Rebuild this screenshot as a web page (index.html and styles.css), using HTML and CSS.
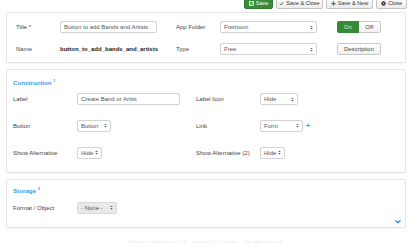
FILE: index.html
```html
<!DOCTYPE html>
<html>
<head>
<meta charset="utf-8">
<link rel="stylesheet" href="styles.css">
</head>
<body>
<div class="toolbar">
  <button class="tb tb-save"><svg class="ic" viewBox="0 0 8 8"><rect x="0.7" y="0.7" width="6.6" height="6.6" fill="none" stroke="#fff" stroke-width="1.2"/><path d="M2 4.2 L3.5 5.6 L6.2 2.3" fill="none" stroke="#fff" stroke-width="1.2"/></svg>Save</button>
  <button class="tb"><svg class="ic" viewBox="0 0 8 8"><path d="M1 4.3 L3.1 6.3 L7 1.8" fill="none" stroke="#3a8a3a" stroke-width="1.6"/></svg>Save &amp; Close</button>
  <button class="tb"><svg class="ic" viewBox="0 0 8 8"><path d="M4 0.5 V7.5 M0.5 4 H7.5" stroke="#3a8a3a" stroke-width="2"/></svg>Save &amp; New</button>
  <button class="tb"><svg class="ic" viewBox="0 0 8 8"><circle cx="4" cy="4" r="3.6" fill="#333"/><path d="M2.6 2.6 L5.4 5.4 M5.4 2.6 L2.6 5.4" stroke="#fff" stroke-width="1"/></svg>Close</button>
</div>

<section class="card card-main">
  <div class="grid-main">
    <span class="lbl">Title *</span>
    <div class="field">Button to add Bands and Artists</div>
    <span class="lbl lbl-2">App Folder</span>
    <div class="field select">Fretroom<svg class="arr" viewBox="0 0 4 6"><path d="M0.3 2.4 L2 0.5 L3.7 2.4 Z M0.3 3.6 L2 5.5 L3.7 3.6 Z" fill="#555"/></svg></div>
    <div class="side toggle"><span class="on">On</span><span class="off">Off</span></div>

    <span class="lbl">Name</span>
    <span class="name">button_to_add_bands_and_artists</span>
    <span class="lbl lbl-2">Type</span>
    <div class="field select">Free<svg class="arr" viewBox="0 0 4 6"><path d="M0.3 2.4 L2 0.5 L3.7 2.4 Z M0.3 3.6 L2 5.5 L3.7 3.6 Z" fill="#555"/></svg></div>
    <button class="side desc">Description</button>
  </div>
</section>

<section class="card card-sec">
  <h2 class="sec-title">Construction <sup>1</sup></h2>
  <div class="grid-sec">
    <span class="lbl">Label</span>
    <div class="field f-label">Create Band or Artist</div>
    <span class="lbl lbl-3">Label Icon</span>
    <div class="field select w-hide2">Hide<svg class="arr" viewBox="0 0 4 6"><path d="M0.3 2.4 L2 0.5 L3.7 2.4 Z M0.3 3.6 L2 5.5 L3.7 3.6 Z" fill="#555"/></svg></div>

    <span class="lbl">Button</span>
    <div class="field select w-button">Button<svg class="arr" viewBox="0 0 4 6"><path d="M0.3 2.4 L2 0.5 L3.7 2.4 Z M0.3 3.6 L2 5.5 L3.7 3.6 Z" fill="#555"/></svg></div>
    <span class="lbl lbl-3">Link</span>
    <div class="with-plus"><div class="field select w-form">Form<svg class="arr" viewBox="0 0 4 6"><path d="M0.3 2.4 L2 0.5 L3.7 2.4 Z M0.3 3.6 L2 5.5 L3.7 3.6 Z" fill="#555"/></svg></div><span class="plus">+</span></div>

    <span class="lbl">Show Alternative</span>
    <div class="field select w-hide">Hide<svg class="arr" viewBox="0 0 4 6"><path d="M0.3 2.4 L2 0.5 L3.7 2.4 Z M0.3 3.6 L2 5.5 L3.7 3.6 Z" fill="#555"/></svg></div>
    <span class="lbl lbl-3">Show Alternative (2)</span>
    <div class="field select w-hide">Hide<svg class="arr" viewBox="0 0 4 6"><path d="M0.3 2.4 L2 0.5 L3.7 2.4 Z M0.3 3.6 L2 5.5 L3.7 3.6 Z" fill="#555"/></svg></div>
  </div>
</section>

<section class="card card-sec card-storage">
  <h2 class="sec-title">Storage <sup>2</sup></h2>
  <div class="grid-sec grid-storage">
    <span class="lbl">Format / Object</span>
    <div class="field select w-none">- None -<svg class="arr" viewBox="0 0 4 6"><path d="M0.3 2.4 L2 0.5 L3.7 2.4 Z M0.3 3.6 L2 5.5 L3.7 3.6 Z" fill="#555"/></svg></div>
  </div>
  <div class="chev-row"><svg class="chev" viewBox="0 0 8 6"><path d="M0.5 0.5 L4 3 L7.5 0.5 L7.5 2.8 L4 5.5 L0.5 2.8 Z" fill="#2f8ee5"/></svg></div>
</section>

<footer class="foot">Fretroom Component v1.0.4 &nbsp;·&nbsp; Copyright © Fretroom &nbsp;·&nbsp; All rights reserved</footer>
</body>
</html>
```

FILE: styles.css
```css
* { box-sizing: border-box; }
body {
  margin: 0;
  background: #fff;
  font-family: "Liberation Sans", Arial, sans-serif;
  font-size: 6px;
  color: #333;
  width: 410px;
  height: 250px;
  overflow: hidden;
}
.toolbar {
  display: flex;
  justify-content: flex-end;
  gap: 3px;
  padding: 0 3px 0 0;
  height: 12px;
  transform: translateY(-3px);
}
.tb {
  height: 12px;
  padding: 0 2px;
  display: flex;
  align-items: center;
  justify-content: center;
  gap: 2px;
  font-family: inherit;
  font-size: 5.5px;
  white-space: nowrap;
  color: #333;
  background: linear-gradient(#fff, #ececec);
  border: 1px solid #c4c4c4;
  border-radius: 2px;
}
.tb-save {
  background: #3b8a3b;
  border-color: #2f7a2f;
  color: #fff;
}
.tb:nth-child(1) { width: 29px; }
.tb:nth-child(2) { width: 47px; }
.tb:nth-child(3) { width: 47px; }
.tb:nth-child(4) { width: 31px; }
.ic { width: 5px; height: 5px; flex: none; }

.card {
  margin: 0 4px 0 6px;
  background: #fff;
  border: 1px solid #e4e4e4;
  border-radius: 2px;
  box-shadow: 0 1px 1px rgba(0,0,0,0.04);
}
.card-main { padding: 8px 0 7px 9px; }
.grid-main {
  display: grid;
  grid-template-columns: 44px 97px 63px 97px 64px;
  grid-template-rows: 12px 12px;
  row-gap: 10px;
  align-items: center;
}
.lbl { color: #444; white-space: nowrap; }
.lbl-2 { padding-left: 19px; }
.side { margin-left: 20px; width: 44px; }
.field {
  height: 12px;
  border: 1px solid #d3d3d3;
  border-radius: 2px;
  background: #fff;
  padding: 0 3px;
  display: flex;
  align-items: center;
  color: #555;
  white-space: nowrap;
  overflow: hidden;
}
.select { justify-content: space-between; }
.arr { width: 3px; height: 5px; flex: none; }
.name { font-weight: bold; color: #222; white-space: nowrap; }
.toggle {
  display: flex;
  height: 12px;
}
.toggle span {
  flex: 1;
  display: flex;
  align-items: center;
  justify-content: center;
}
.on {
  background: #378a35;
  color: #d8f0d6;
  border-radius: 2px 0 0 2px;
}
.off {
  border: 1px solid #c8c8c8;
  border-left: none;
  border-radius: 0 2px 2px 0;
  background: linear-gradient(#fff, #f0f0f0);
  color: #444;
}
.desc {
  height: 12px;
  padding: 0;
  font-family: inherit;
  font-size: 6px;
  color: #444;
  border: 1px solid #c8c8c8;
  border-radius: 2px;
  background: linear-gradient(#fff, #f0f0f0);
}

.card-sec {
  margin-top: 6px;
  padding: 7px 0 13px 6px;
}
.sec-title {
  margin: 0;
  height: 8px;
  line-height: 8px;
  font-size: 6.2px;
  font-weight: bold;
  color: #3b98e8;
}
.sec-title sup { font-size: 4px; vertical-align: 3px; }
.grid-sec {
  margin-top: 8px;
  display: grid;
  grid-template-columns: 64px 103px 80px auto;
  grid-auto-rows: 12px;
  row-gap: 14.8px;
  align-items: center;
}
.lbl-3 { padding-left: 16px; }
.f-label { width: 103px; }
.w-hide2 { width: 38px; }
.w-button { width: 34px; }
.w-form { width: 43px; }
.w-hide { width: 25px; }
.with-plus { display: flex; align-items: center; gap: 3px; }
.plus { color: #3b98e8; font-weight: bold; font-size: 7px; }

.card-storage {
  margin-top: 6px;
  padding: 5px 0 2px 6px;
}
.grid-storage { margin-top: 9px; }
.w-none {
  width: 40px;
  background: #e9e9e9;
  border-color: #d9d9d9;
}
.chev-row {
  display: flex;
  justify-content: flex-end;
  padding-right: 4px;
  margin-top: 5px;
  height: 6px;
}
.chev { width: 6px; height: 5px; }

.foot {
  margin-top: 11px;
  text-align: center;
  font-size: 4px;
  color: #dfe7ef;
  letter-spacing: 0.3px;
}
```
